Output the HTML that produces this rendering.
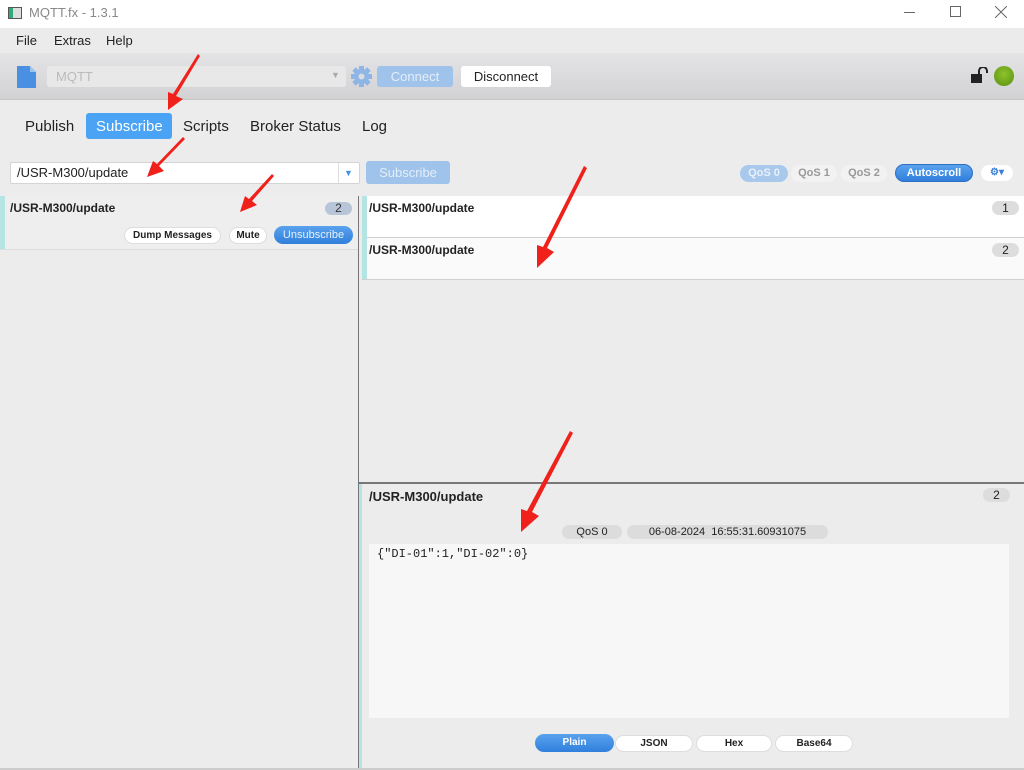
<!DOCTYPE html>
<html><head><meta charset="utf-8"><style>
*{margin:0;padding:0;box-sizing:border-box}
body{width:1024px;height:770px;overflow:hidden;background:#ececec;font-family:"Liberation Sans",sans-serif;position:relative;color:#222}
.a{position:absolute}
.t{position:absolute;white-space:nowrap}
.pill{position:absolute;border-radius:9px;text-align:center;font-weight:bold;font-size:11px}
</style></head><body>
<div class="a" style="left:0;top:0;width:1024px;height:28px;background:#fff"></div>
<div class="a" style="left:8px;top:7px;width:14px;height:12px;border:1px solid #555;background:linear-gradient(90deg,#3a7 0 4px,#ddd 4px)"></div>
<div class="t" style="left:29px;top:5px;font-size:13px;color:#888">MQTT.fx - 1.3.1</div>
<div class="a" style="left:904px;top:12px;width:11px;height:1px;background:#666"></div>
<div class="a" style="left:950px;top:6px;width:11px;height:11px;border:1px solid #666"></div>
<svg class="a" style="left:995px;top:6px" width="12" height="12"><path d="M0 0L12 12M12 0L0 12" stroke="#666" stroke-width="1"/></svg>
<div class="a" style="left:0;top:28px;width:1024px;height:25px;background:#ebebeb"></div>
<div class="t" style="left:16px;top:33px;font-size:13px">File</div>
<div class="t" style="left:54px;top:33px;font-size:13px">Extras</div>
<div class="t" style="left:106px;top:33px;font-size:13px">Help</div>
<div class="a" style="left:0;top:53px;width:1024px;height:47px;background:linear-gradient(#e4e4e6,#d2d2d4);border-bottom:1px solid #c6c6c6"></div>
<svg class="a" style="left:17px;top:66px" width="19" height="22"><path d="M0 0H13L19 6V22H0Z" fill="#4a90e2"/><path d="M13 0V6H19" fill="#9cc4f0"/></svg>
<div class="a" style="left:47px;top:66px;width:299px;height:21px;background:#e8e8e8;border-radius:3px"></div>
<div class="t" style="left:56px;top:69px;font-size:13px;color:#bbb">MQTT</div>
<div class="t" style="left:331px;top:70px;font-size:9px;color:#aaa">▼</div>
<svg class="a" style="left:351px;top:66px" width="21" height="21" viewBox="-10.5 -10.5 21 21"><g fill="#8db5e6"><circle r="7.5"/><rect x="-2.5" y="-10.5" width="5" height="21"/><rect x="-2.5" y="-10.5" width="5" height="21" transform="rotate(45)"/><rect x="-2.5" y="-10.5" width="5" height="21" transform="rotate(90)"/><rect x="-2.5" y="-10.5" width="5" height="21" transform="rotate(135)"/></g><circle r="3" fill="#dcdcde"/></svg>
<div class="a" style="left:377px;top:66px;width:76px;height:21px;background:#9fc3ea;border-radius:3px;color:#e3eefa;font-size:13px;text-align:center;line-height:21px">Connect</div>
<div class="a" style="left:461px;top:66px;width:90px;height:21px;background:#fff;border-radius:3px;font-size:13px;text-align:center;line-height:21px">Disconnect</div>
<svg class="a" style="left:971px;top:67px" width="18" height="17"><rect x="0" y="7" width="11" height="9" fill="#222"/><path d="M8 7V4a4 4 0 0 1 8 0v2" stroke="#222" stroke-width="2" fill="none"/></svg>
<div class="a" style="left:994px;top:66px;width:20px;height:20px;border-radius:50%;background:radial-gradient(circle at 50% 40%,#8bc42a,#5a8e14)"></div>
<div class="t" style="left:25px;top:118px;font-size:15px">Publish</div>
<div class="a" style="left:86px;top:113px;width:86px;height:26px;background:#4aa3f5;border-radius:3px"></div>
<div class="t" style="left:96px;top:118px;font-size:15px;color:#fff">Subscribe</div>
<div class="t" style="left:183px;top:118px;font-size:15px">Scripts</div>
<div class="t" style="left:250px;top:118px;font-size:15px">Broker Status</div>
<div class="t" style="left:362px;top:118px;font-size:15px">Log</div>
<div class="a" style="left:10px;top:162px;width:350px;height:22px;background:#fff;border:1px solid #d4d4d4;border-radius:2px"></div>
<div class="a" style="left:338px;top:163px;width:1px;height:20px;background:#ddd"></div>
<div class="t" style="left:17px;top:165px;font-size:13px">/USR-M300/update</div>
<div class="t" style="left:344px;top:168px;font-size:9px;color:#4a90e2">▼</div>
<div class="a" style="left:366px;top:161px;width:84px;height:23px;background:#9fc3ea;border-radius:3px;color:#e3eefa;font-size:13px;text-align:center;line-height:23px">Subscribe</div>
<div class="pill" style="left:740px;top:165px;width:48px;height:17px;line-height:17px;background:#a8c8ec;color:#e8f1fb">QoS 0</div>
<div class="pill" style="left:791px;top:165px;width:46px;height:17px;line-height:17px;background:#f2f2f2;color:#999">QoS 1</div>
<div class="pill" style="left:841px;top:165px;width:46px;height:17px;line-height:17px;background:#f2f2f2;color:#999">QoS 2</div>
<div class="pill" style="left:895px;top:164px;width:78px;height:18px;line-height:16px;background:linear-gradient(#5aa2ee,#2f7fdc);color:#fff;border:1px solid #2c6fc4">Autoscroll</div>
<div class="pill" style="left:981px;top:165px;width:32px;height:16px;line-height:16px;background:#fff;color:#3a7fd6;font-size:10px">⚙▾</div>
<!-- left panel -->
<div class="a" style="left:0;top:196px;width:358px;height:54px;background:#eeeeee;border-bottom:1px solid #dcdcdc"></div>
<div class="a" style="left:0;top:196px;width:5px;height:53px;background:#b4e4e4"></div>
<div class="t" style="left:10px;top:201px;font-size:12px;font-weight:bold">/USR-M300/update</div>
<div class="pill" style="left:325px;top:202px;width:27px;height:13px;line-height:13px;background:#b8c4d8;font-weight:normal;font-size:12px;color:#333">2</div>
<div class="pill" style="left:124px;top:227px;width:97px;height:17px;line-height:15px;background:#fff;border:1px solid #ddd;font-size:10px">Dump Messages</div>
<div class="pill" style="left:229px;top:227px;width:38px;height:17px;line-height:15px;background:#fff;border:1px solid #ddd;font-size:10px">Mute</div>
<div class="pill" style="left:274px;top:226px;width:79px;height:18px;line-height:18px;background:linear-gradient(#5aa2ee,#2f7fdc);color:#e8f1fb;font-weight:normal;font-size:11px">Unsubscribe</div>
<div class="a" style="left:358px;top:196px;width:1px;height:574px;background:#777"></div>
<!-- right list -->
<div class="a" style="left:362px;top:196px;width:662px;height:42px;background:#fff;border-bottom:1px solid #d0d0d0"></div>
<div class="a" style="left:362px;top:238px;width:662px;height:42px;background:#fafafa;border-bottom:1px solid #d0d0d0"></div>
<div class="a" style="left:362px;top:196px;width:5px;height:83px;background:#b4e4e4"></div>
<div class="t" style="left:369px;top:201px;font-size:12px;font-weight:bold">/USR-M300/update</div>
<div class="t" style="left:369px;top:243px;font-size:12px;font-weight:bold">/USR-M300/update</div>
<div class="pill" style="left:992px;top:201px;width:27px;height:14px;line-height:14px;background:#ddd;font-weight:normal;font-size:12px">1</div>
<div class="pill" style="left:992px;top:243px;width:27px;height:14px;line-height:14px;background:#ddd;font-weight:normal;font-size:12px">2</div>
<!-- detail -->
<div class="a" style="left:359px;top:482px;width:665px;height:2px;background:#777"></div>
<div class="a" style="left:359px;top:484px;width:3px;height:286px;background:#b4e4e4"></div>
<div class="t" style="left:369px;top:489px;font-size:13px;font-weight:bold">/USR-M300/update</div>
<div class="pill" style="left:983px;top:488px;width:27px;height:14px;line-height:14px;background:#ddd;font-weight:normal;font-size:12px">2</div>
<div class="pill" style="left:562px;top:525px;width:60px;height:14px;line-height:14px;background:#dcdcdc;font-weight:normal">QoS 0</div>
<div class="pill" style="left:627px;top:525px;width:201px;height:14px;line-height:14px;background:#dcdcdc;font-weight:normal">06-08-2024&nbsp; 16:55:31.60931075</div>
<div class="a" style="left:369px;top:544px;width:640px;height:174px;background:#f7f7f7"></div>
<div class="t" style="left:377px;top:547px;font-size:12px;font-family:'Liberation Mono',monospace">{"DI-01":1,"DI-02":0}</div>
<div class="pill" style="left:535px;top:734px;width:79px;height:18px;line-height:18px;background:linear-gradient(#5aa2ee,#2f7fdc);color:#fff;font-size:10px">Plain</div>
<div class="pill" style="left:615px;top:735px;width:78px;height:17px;line-height:15px;background:#fff;border:1px solid #ddd;font-size:10px">JSON</div>
<div class="pill" style="left:696px;top:735px;width:76px;height:17px;line-height:15px;background:#fff;border:1px solid #ddd;font-size:10px">Hex</div>
<div class="pill" style="left:775px;top:735px;width:78px;height:17px;line-height:15px;background:#fff;border:1px solid #ddd;font-size:10px">Base64</div>
<div class="a" style="left:0;top:768px;width:1024px;height:2px;background:#ccc"></div>
<!-- arrows -->
<svg class="a" style="left:0;top:0" width="1024" height="770">
<g fill="#f0201a">
<polygon points="198,54 200,56 176,96 183,99 168,110 168,92 173,94"/>
<polygon points="183,137 185,139 159,166 164,171 147,177 153,161 157,164"/>
<polygon points="272,174 274,176 252,201 257,205 240,212 245,196 249,199"/>
<polygon points="584,166 587,168 547,248 554,252 537,268 537,245 543,247"/>
<polygon points="570,431 573,433 532,512 539,516 521,532 521,509 527,511"/>
</g></svg>
</body></html>
